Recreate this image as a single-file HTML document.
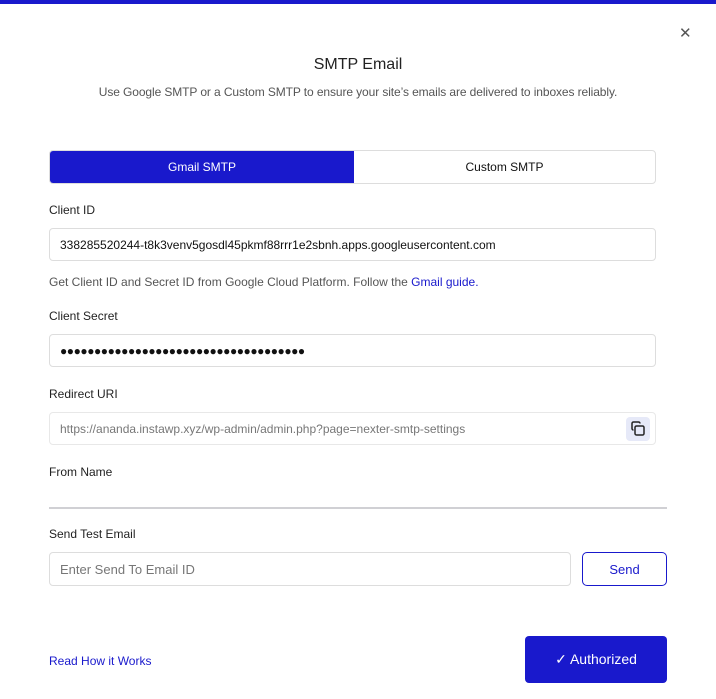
<!DOCTYPE html><html><head><style>
body{margin:0;width:716px;height:699px;background:#fff;font-family:"Liberation Sans",sans-serif;position:relative;overflow:hidden;color:#1e1e1e}
.a{position:absolute}
.lbl{font-size:12px;color:#222}
.inp{position:absolute;left:49px;width:607px;height:32px;border:1px solid #ddd;border-radius:4px;box-sizing:border-box;font-size:12px;display:flex;align-items:center;padding-left:10px}
</style></head><body>
<div class="a" style="left:0;top:0;width:716px;height:4px;background:#1919cc"></div>
<div class="a" style="left:679px;top:24px;font-size:15px;color:#555">✕</div>
<div class="a" style="left:0;width:716px;top:56px;text-align:center;font-size:16px;color:#222">SMTP Email</div>
<div class="a" style="left:0;width:716px;top:85px;text-align:center;font-size:12px;color:#555;letter-spacing:-0.1px">Use Google SMTP or a Custom SMTP to ensure your site’s emails are delivered to inboxes reliably.</div>
<div class="a" style="left:49px;top:150px;width:607px;height:34px;border:1px solid #ddd;border-radius:4px;box-sizing:border-box;overflow:hidden;display:flex;font-size:12px">
<div style="width:304px;background:#1919cc;color:#fff;display:flex;align-items:center;justify-content:center">Gmail SMTP</div>
<div style="flex:1;display:flex;align-items:center;justify-content:center;color:#111">Custom SMTP</div></div>
<div class="a lbl" style="left:49px;top:203px">Client ID</div>
<div class="inp" style="top:228px;height:33px;color:#111">338285520244-t8k3venv5gosdl45pkmf88rrr1e2sbnh.apps.googleusercontent.com</div>
<div class="a" style="left:49px;top:275px;font-size:12px;color:#555">Get Client ID and Secret ID from Google Cloud Platform. Follow the <span style="color:#1919cc">Gmail guide.</span></div>
<div class="a lbl" style="left:49px;top:309px">Client Secret</div>
<div class="inp" style="top:334px;height:33px;font-size:12px;letter-spacing:-0.45px;color:#111">●●●●●●●●●●●●●●●●●●●●●●●●●●●●●●●●●●●●</div>
<div class="a lbl" style="left:49px;top:387px">Redirect URI</div>
<div class="inp" style="top:412px;height:33px;color:#777;border-color:#e8e8e8">https://ananda.instawp.xyz/wp-admin/admin.php?page=nexter-smtp-settings</div>
<div class="a" style="left:626px;top:417px;width:24px;height:24px;background:#e6e9f8;border-radius:4px"><svg width="24" height="24" viewBox="0 0 24 24" fill="none" stroke="#222" stroke-width="1.5"><rect x="9" y="9" width="9" height="9" rx="1.5"/><path d="M14 6.5V6.5a1.5 1.5 0 0 0-1.5-1.5H7.5A1.5 1.5 0 0 0 6 6.5v5A1.5 1.5 0 0 0 7.5 13"/></svg></div>
<div class="a lbl" style="left:49px;top:465px">From Name</div>
<div class="a" style="left:49px;top:507px;width:618px;height:2px;background:#d0d0d4"></div>
<div class="a lbl" style="left:49px;top:527px">Send Test Email</div>
<div class="inp" style="top:552px;width:522px;height:34px;font-size:13px;color:#777">Enter Send To Email ID</div>
<div class="a" style="left:582px;top:552px;width:85px;height:34px;border:1px solid #1919cc;border-radius:5px;box-sizing:border-box;display:flex;align-items:center;justify-content:center;color:#1919cc;font-size:13px">Send</div>
<div class="a" style="left:49px;top:654px;font-size:12px;color:#1919cc">Read How it Works</div>
<div class="a" style="left:525px;top:636px;width:142px;height:47px;background:#1919cc;border-radius:4px;display:flex;align-items:center;justify-content:center;color:#fff;font-size:14px">✓ Authorized</div>
</body></html>
